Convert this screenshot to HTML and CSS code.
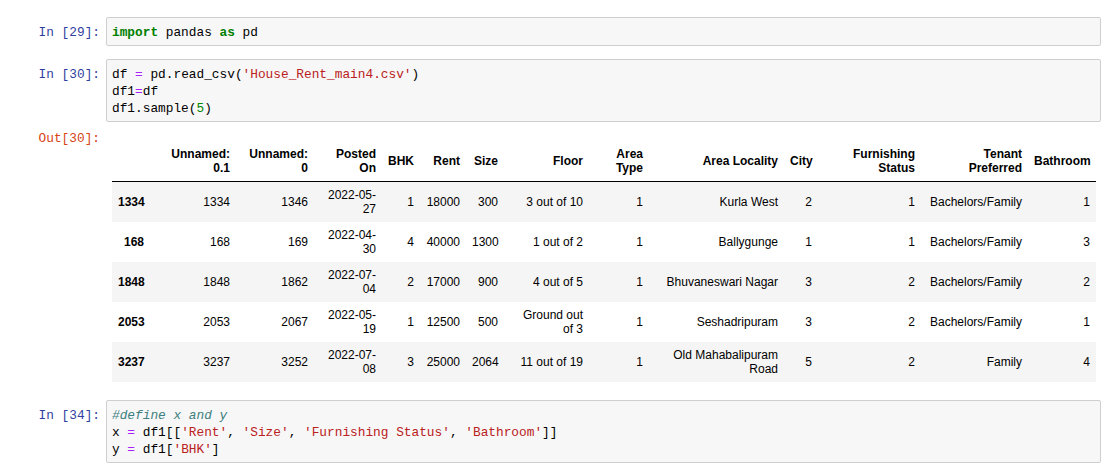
FILE: index.html
```html
<!DOCTYPE html>
<html>
<head>
<meta charset="utf-8">
<title>Notebook</title>
<link rel="stylesheet" href="styles.css">
</head>
<body>
<div class="notebook">
  <div class="cell">
    <div class="prompt in">In [29]:</div>
    <div class="input"><pre><span class="kw">import</span> pandas <span class="kw">as</span> pd</pre></div>
  </div>

  <div class="cell gap1">
    <div class="prompt in">In [30]:</div>
    <div class="input"><pre>df <span class="op">=</span> pd.read_csv(<span class="st">'House_Rent_main4.csv'</span>)
df1<span class="op">=</span>df
df1.sample(<span class="nu">5</span>)</pre></div>
  </div>

  <div class="output">
    <div class="prompt out">Out[30]:</div>
    <div class="out-body">
      <table class="dataframe">
        <thead>
          <tr>
            <th class="w1"></th>
            <th class="w2">Unnamed:<br>0.1</th>
            <th class="w3">Unnamed:<br>0</th>
            <th class="w4">Posted<br>On</th>
            <th class="w5">BHK</th>
            <th class="w6">Rent</th>
            <th class="w7">Size</th>
            <th class="w8">Floor</th>
            <th class="w9">Area<br>Type</th>
            <th class="w10">Area Locality</th>
            <th class="w11">City</th>
            <th class="w12">Furnishing<br>Status</th>
            <th class="w13">Tenant<br>Preferred</th>
            <th class="w14">Bathroom</th>
          </tr>
        </thead>
        <tbody>
          <tr>
            <th>1334</th><td>1334</td><td>1346</td><td>2022-05-<br>27</td><td>1</td><td>18000</td><td>300</td><td>3 out of 10</td><td>1</td><td>Kurla West</td><td>2</td><td>1</td><td>Bachelors/Family</td><td>1</td>
          </tr>
          <tr>
            <th>168</th><td>168</td><td>169</td><td>2022-04-<br>30</td><td>4</td><td>40000</td><td>1300</td><td>1 out of 2</td><td>1</td><td>Ballygunge</td><td>1</td><td>1</td><td>Bachelors/Family</td><td>3</td>
          </tr>
          <tr>
            <th>1848</th><td>1848</td><td>1862</td><td>2022-07-<br>04</td><td>2</td><td>17000</td><td>900</td><td>4 out of 5</td><td>1</td><td>Bhuvaneswari Nagar</td><td>3</td><td>2</td><td>Bachelors/Family</td><td>2</td>
          </tr>
          <tr>
            <th>2053</th><td>2053</td><td>2067</td><td>2022-05-<br>19</td><td>1</td><td>12500</td><td>500</td><td>Ground out<br>of 3</td><td>1</td><td>Seshadripuram</td><td>3</td><td>2</td><td>Bachelors/Family</td><td>1</td>
          </tr>
          <tr>
            <th>3237</th><td>3237</td><td>3252</td><td>2022-07-<br>08</td><td>3</td><td>25000</td><td>2064</td><td>11 out of 19</td><td>1</td><td>Old Mahabalipuram<br>Road</td><td>5</td><td>2</td><td>Family</td><td>4</td>
          </tr>
        </tbody>
      </table>
    </div>
  </div>

  <div class="cell gap3">
    <div class="prompt in">In [34]:</div>
    <div class="input"><pre><span class="cm">#define x and y</span>
x <span class="op">=</span> df1[[<span class="st">'Rent'</span>, <span class="st">'Size'</span>, <span class="st">'Furnishing Status'</span>, <span class="st">'Bathroom'</span>]]
y <span class="op">=</span> df1[<span class="st">'BHK'</span>]</pre></div>
  </div>
</div>
</body>
</html>
```

FILE: styles.css
```css
html, body {
  margin: 0;
  padding: 0;
  background: #ffffff;
}

.notebook {
  padding: 17px 16px 0 0;
}

.cell {
  display: flex;
  align-items: flex-start;
}

.gap1 {
  margin-top: 13px;
}

.gap3 {
  margin-top: 18px;
}

.prompt {
  flex: 0 0 106px;
  box-sizing: border-box;
  padding-right: 6px;
  text-align: right;
  font-family: "Liberation Mono", "DejaVu Sans Mono", monospace;
  font-size: 12.8px;
  line-height: 17px;
  white-space: pre;
}

.cell .prompt {
  padding-top: 7px;
}

.prompt.in {
  color: #303f9f;
}

.prompt.out {
  color: #d84315;
}

.input {
  flex: 1 1 auto;
  min-width: 0;
  background: #f7f7f7;
  border: 1px solid #cfcfcf;
  border-radius: 2px;
  padding: 6px 5px 4px 5px;
}

.input pre {
  margin: 0;
  font-family: "Liberation Mono", "DejaVu Sans Mono", monospace;
  font-size: 12.8px;
  line-height: 17px;
  color: #000;
}

.kw {
  color: #008000;
  font-weight: bold;
}

.op {
  color: #aa22ff;
}

.st {
  color: #ba2121;
}

.nu {
  color: #008800;
}

.cm {
  color: #408080;
  font-style: italic;
}

.output {
  display: flex;
  align-items: flex-start;
  margin-top: 8px;
}

.out-body {
  flex: 1 1 auto;
  padding-left: 6px;
  padding-top: 11px;
}

.dataframe {
  border-collapse: collapse;
  border-spacing: 0;
  table-layout: fixed;
  width: 984px;
  font-family: "Liberation Sans", Arial, sans-serif;
  font-size: 12px;
  line-height: 14px;
  color: #000;
}

.dataframe th,
.dataframe td {
  box-sizing: border-box;
  padding: 6px;
  text-align: right;
  vertical-align: middle;
  white-space: nowrap;
  border: none;
}

.dataframe th {
  font-weight: bold;
}

.dataframe thead th {
  border-bottom: 1px solid #000;
}

.dataframe tbody tr:nth-child(odd) {
  background: #f5f5f5;
}

.w1 { width: 38px; }
.w2 { width: 86px; }
.w3 { width: 78px; }
.w4 { width: 68px; }
.w5 { width: 38px; }
.w6 { width: 46px; }
.w7 { width: 38px; }
.w8 { width: 85px; }
.w9 { width: 60px; }
.w10 { width: 135px; }
.w11 { width: 34px; }
.w12 { width: 103px; }
.w13 { width: 107px; }
.w14 { width: 68px; }
```
